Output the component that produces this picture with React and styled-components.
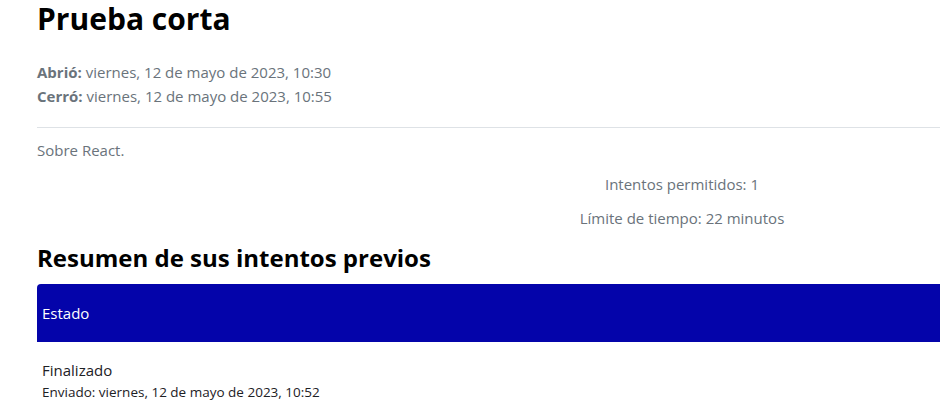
import React from "react";
import styled, { createGlobalStyle } from "styled-components";

const Global = createGlobalStyle`
  html, body { margin: 0; padding: 0; background: #fff; overflow: hidden; }
  body { font-family: "Open Sans", "Noto Sans", sans-serif; color: #1d2125; }
`;

const Page = styled.div`
  width: 1290px;
  padding: 1px 0 0 37px;
`;

const Title = styled.h1`
  margin: 0;
  font-size: 30px;
  font-weight: 700;
  line-height: 1.2;
  color: #000;
`;

const Dates = styled.div`
  margin-top: 23px;
  font-size: 15px;
  line-height: 24px;
  color: #6a737b;
`;

const DateLine = styled.div``;

const Label = styled.strong`
  font-weight: 700;
`;

const Divider = styled.hr`
  margin: 19px 0 0;
  border: 0;
  border-top: 1px solid #dee2e6;
`;

const Intro = styled.p`
  margin: 11px 0 0;
  font-size: 15px;
  line-height: 22px;
  color: #6a737b;
`;

const Info = styled.p`
  margin: ${(p) => p.$top}px 0 0;
  text-align: center;
  font-size: 15px;
  line-height: 22px;
  color: #6a737b;
`;

const Subtitle = styled.h2`
  margin: 15px 0 0;
  font-size: 24px;
  font-weight: 700;
  line-height: 1.2;
  color: #000;
`;

const Table = styled.div`
  margin-top: 11px;
`;

const HeadRow = styled.div`
  height: 58px;
  display: flex;
  align-items: center;
  padding-left: 5px;
  background: #0404aa;
  color: #fff;
  font-size: 15px;
  border-top-left-radius: 4px;
`;

const Cell = styled.div`
  padding: 17px 5px;
  font-size: 15px;
  line-height: 22px;
  color: #1d2125;
`;

const Sub = styled.div`
  font-size: 13.5px;
  line-height: 23px;
`;

export default function App() {
  return (
    <>
      <Global />
      <Page>
        <Title>Prueba corta</Title>
        <Dates>
          <DateLine>
            <Label>Abrió:</Label> viernes, 12 de mayo de 2023, 10:30
          </DateLine>
          <DateLine>
            <Label>Cerró:</Label> viernes, 12 de mayo de 2023, 10:55
          </DateLine>
        </Dates>
        <Divider />
        <Intro>Sobre React.</Intro>
        <Info $top={12}>Intentos permitidos: 1</Info>
        <Info $top={12}>Límite de tiempo: 22 minutos</Info>
        <Subtitle>Resumen de sus intentos previos</Subtitle>
        <Table>
          <HeadRow>Estado</HeadRow>
          <Cell>
            Finalizado
            <Sub>Enviado: viernes, 12 de mayo de 2023, 10:52</Sub>
          </Cell>
        </Table>
      </Page>
    </>
  );
}
